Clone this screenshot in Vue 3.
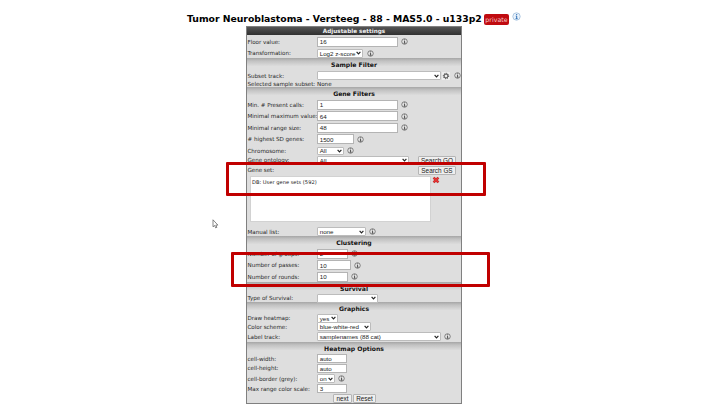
<script setup>
const rows = [
  { h: 13, label: 'Floor value:', kind: 'input', w: 81, fh: 10, value: '16', info: 3 },
  { h: 10, label: 'Transformation:', kind: 'select', w: 46, fh: 9, value: 'Log2 z-score', info: 4 },
  { h: 12, title: 'Sample Filter' },
  { h: 11, label: 'Subset track:', kind: 'select', w: 124, fh: 9, value: '', gear: true, info: 4 },
  { h: 6, label: 'Selected sample subset:', kind: 'plain', value: 'None' },
  { h: 12, title: 'Gene Filters' },
  { h: 11, label: 'Min. # Present calls:', kind: 'input', w: 81, fh: 10, value: '1', info: 3 },
  { h: 12, label: 'Minimal maximum value:', kind: 'input', w: 81, fh: 10, value: '64', info: 3 },
  { h: 11, label: 'Minimal range size:', kind: 'input', w: 81, fh: 10, value: '48', info: 3 },
  { h: 12, label: '# highest SD genes:', kind: 'input', w: 37, fh: 10, value: '1500', info: 3 },
  { h: 11, label: 'Chromosome:', kind: 'select', w: 27, fh: 8, value: 'All', info: 3 },
  { h: 8, label: 'Gene ontology:', kind: 'select', w: 92, fh: 9, value: 'All', button: 'Search GO', bgap: 9 },
  { h: 12, label: 'Gene set:', kind: 'none', w: 92, fh: 9, button: 'Search GS', bgap: 9 },
  { h: 46, list: 'DB: User gene sets (592)' },
  { h: 5 },
  { h: 9, label: 'Manual list:', kind: 'select', w: 49, fh: 9, value: 'none', info: 3 },
  { h: 12, title: 'Clustering' },
  { h: 11, label: 'Number of groups:', kind: 'input', w: 31, fh: 10, value: '2', info: 3 },
  { h: 12, label: 'Number of passes:', kind: 'input', w: 34, fh: 10, value: '10', info: 3 },
  { h: 11, label: 'Number of rounds:', kind: 'input', w: 31, fh: 10, value: '10', info: 3 },
  { h: 12, title: 'Survival' },
  { h: 8, label: 'Type of Survival:', kind: 'select', w: 61, fh: 9, value: '' },
  { h: 12, title: 'Graphics' },
  { h: 8, label: 'Draw heatmap:', kind: 'select', w: 21, fh: 9, value: 'yes' },
  { h: 9, label: 'Color scheme:', kind: 'select', w: 54, fh: 9, value: 'blue-white-red' },
  { h: 11, label: 'Label track:', kind: 'select', w: 124, fh: 9, value: 'samplenames (88 cat)', info: 3 },
  { h: 12, title: 'Heatmap Options' },
  { h: 9, label: 'cell-width:', kind: 'input', w: 30, fh: 9, value: 'auto' },
  { h: 10, label: 'cell-height:', kind: 'input', w: 30, fh: 9, value: 'auto' },
  { h: 11, label: 'cell-border (grey):', kind: 'select', w: 18, fh: 9, value: 'on', info: 3 },
  { h: 9, label: 'Max range color scale:', kind: 'input', w: 30, fh: 9, value: '3' },
]
</script>

<template>
  <main class="page">
    <header class="heading">
      <h1>Tumor Neuroblastoma - Versteeg - 88 - MAS5.0 - u133p2</h1>
      <span class="badge">private</span>
      <svg class="hinfo" viewBox="0 0 9 9"><circle cx="4.5" cy="4.5" r="3.7" /><path d="M4.7 2v1M3.8 4h.9v2.6M3.6 6.7h2" /></svg>
    </header>
    <section class="panel">
      <div class="topbar">Adjustable settings</div>
      <div v-for="(r, i) in rows" :key="i" class="row" :class="{ section: r.title }" :style="{ height: r.h + 'px' }">
        <span v-if="r.title">{{ r.title }}</span>
        <template v-else-if="r.list">
          <div class="list">{{ r.list }}</div>
          <svg class="cross" viewBox="0 0 8 8"><path class="o" d="M1.6 1.6l4.8 4.8M6.4 1.6L1.6 6.4" /><path class="i" d="M1.7 1.7l4.6 4.6M6.3 1.7L1.7 6.3" /></svg>
        </template>
        <template v-else-if="r.label">
          <label class="label">{{ r.label }}</label>
          <span v-if="r.kind === 'plain'" class="plain">{{ r.value }}</span>
          <div v-else class="field" :class="r.kind" :style="{ width: r.w + 'px', height: r.fh + 'px' }">
            <span>{{ r.value }}</span>
            <svg v-if="r.kind === 'select'" class="chev" viewBox="0 0 5 4"><path d="M.6 .9l1.9 1.9L4.4 .9" /></svg>
          </div>
          <svg v-if="r.gear" class="gear" viewBox="0 0 8 8"><circle class="teeth" cx="4" cy="4" r="2.7" /><circle class="ring" cx="4" cy="4" r="2" /></svg>
          <svg v-if="r.info" class="info" viewBox="0 0 7 7" :style="{ marginLeft: r.info + 'px' }"><circle cx="3.5" cy="3.5" r="2.75" /><path d="M3.6 1.4v.8M2.9 3h.7v2.1M2.7 5.2h1.8" /></svg>
          <span v-if="r.button" class="btn" :style="{ marginLeft: r.bgap + 'px' }">{{ r.button }}</span>
        </template>
      </div>
      <div class="actions"><span class="btn next">next</span><span class="btn reset">Reset</span></div>
    </section>
    <div class="mark mark-set"></div>
    <div class="mark mark-cluster"></div>
    <svg class="pointer" viewBox="0 0 7 10"><path d="M1 .8v7l1.6-1.3 1.1 2.4 1.2-.6-1.1-2.2h2.1z" /></svg>
  </main>
</template>

<style>
body { margin: 0; background: #fff; }
</style>
<style scoped>
.page { position: relative; width: 720px; height: 416px; overflow: hidden; font-family: "DejaVu Sans", sans-serif; color: #222; }
.heading { display: flex; height: 26px; padding-left: 187px; box-sizing: border-box; }
h1 { flex: none; margin: 12px 0 0; width: 294px; font-size: 9.3px; line-height: 13px; font-weight: bold; letter-spacing: -0.02px; white-space: nowrap; color: #000; }
.badge { flex: none; margin: 14px 0 0 3px; width: 25px; height: 11px; border-radius: 2px; background: #c00b10; color: #f6c9c9; font-size: 6.3px; line-height: 11px; text-align: center; }
.hinfo { width: 9px; height: 9px; margin: 12px 0 0 3px; }
.hinfo circle { fill: #e9f2fb; stroke: #9dbbd9; stroke-width: .8; }
.hinfo path { fill: none; stroke: #2f6fb5; stroke-width: 1; }
.panel { width: 216px; height: 378px; margin-left: 246px; box-sizing: border-box; border: 1px solid #808080; background: #dedede; }
.topbar { height: 8px; background: linear-gradient(#555, #303030); color: #eee; font-size: 5.7px; line-height: 8px; font-weight: bold; text-align: center; }
.row { display: flex; align-items: center; font-size: 5.6px; white-space: nowrap; }
.section { justify-content: center; font-weight: bold; font-size: 6.1px; background: linear-gradient(#a6a6a6, #c2c2c2 25%, #dedede 70%); color: #111; }
.label { flex: none; width: 70px; padding-left: .5px; box-sizing: border-box; line-height: 8px; letter-spacing: -0.04px; color: #2a2a2a; }
.plain { line-height: 8px; }
.field { flex: none; box-sizing: border-box; display: flex; align-items: center; justify-content: space-between; padding: 1px 1px 0 1.7px; font-family: "Liberation Sans", sans-serif; font-size: 6.2px; line-height: 8px; color: #222; }
.input { background: #fff; border: 1px solid #b4b4b4; }
.select { background: #fff; border: 1px solid #bcbcbc; border-radius: 1px; }
.chev { flex: none; width: 5px; height: 4px; margin-top: -1px; }
.chev path { fill: none; stroke: #222; stroke-width: 1.2; }
.info { flex: none; width: 7px; height: 7px; }
.info circle { fill: #e8e8e8; stroke: #555; stroke-width: .7; }
.info path { fill: none; stroke: #333; stroke-width: .8; }
.gear { flex: none; width: 8px; height: 8px; margin-left: 1px; background: #eee; }
.gear circle { fill: none; stroke: #444; }
.gear .teeth { stroke-width: 1; stroke-dasharray: 1 1.12; }
.gear .ring { stroke-width: 1; }
.btn { flex: none; box-sizing: border-box; width: 38px; height: 9px; border: 1px solid #b5b5b5; border-radius: 1px; background: #efefef; font-family: "Liberation Sans", sans-serif; font-size: 6.4px; line-height: 8px; text-align: center; color: #222; }
.list { align-self: stretch; width: 181px; margin-left: 3px; box-sizing: border-box; border: 1px solid #d2d2d2; background: #fff; padding: 2px 0 0 1px; font-size: 5.15px; line-height: 7px; }
.cross { align-self: flex-start; width: 8px; height: 8px; margin-left: 1px; }
.cross path { fill: none; }
.cross .o { stroke: #a33; stroke-width: 2.6; }
.cross .i { stroke: #e33; stroke-width: 1.5; }
.actions { display: flex; height: 10px; padding-left: 86px; align-items: center; }
.next { width: 19px; }
.reset { width: 23px; margin-left: 1px; }
.mark { position: absolute; box-sizing: border-box; border: 3px solid #c00000; border-radius: 1px; }
.mark-set { left: 226px; top: 162px; width: 260px; height: 34px; }
.mark-cluster { left: 231px; top: 252px; width: 259px; height: 35px; }
.pointer { position: absolute; left: 212px; top: 219px; width: 7px; height: 10px; }
.pointer path { fill: #fff; stroke: #555; stroke-width: .7; }
</style>
